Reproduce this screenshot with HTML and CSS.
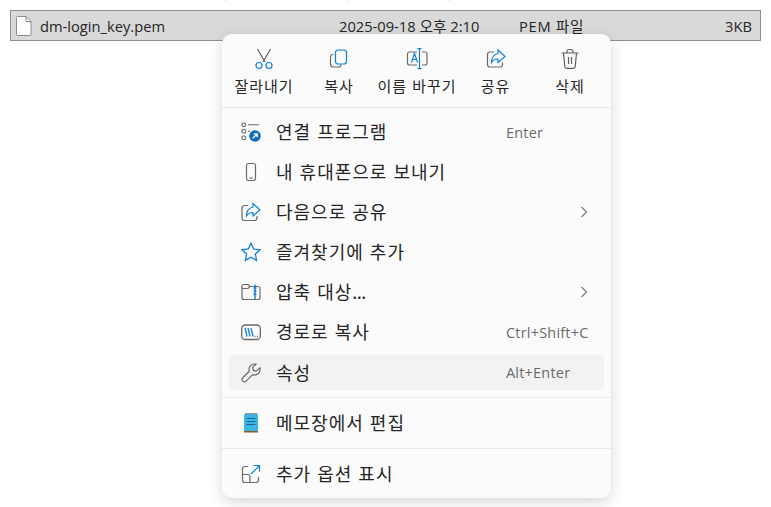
FILE: index.html

```html
<!DOCTYPE html>
<html lang="ko">
<head>
  <meta charset="UTF-8" />
  <meta name="viewport" content="width=device-width, initial-scale=1" />
  <title>파일 메뉴</title>
  <link rel="stylesheet" href="styles.css">
</head>
<body>
  <div class="header-ticks">
    <span class="tick tick-name"></span>
    <span class="tick tick-date"></span>
    <span class="tick tick-type"></span>
  </div>

  <div class="file-row">
    <svg class="file-icon" width="16" height="20" viewBox="0 0 16 20" fill="#fff" stroke="#8a8a8a">
      <path d="M1.500 .5h8.500l5 5v13a1 1 0 0 1-1 1h-12.500a1 1 0 0 1-1-1v-17a1 1 0 0 1 1-1z"/>
      <path d="M10 .5v5h5" fill="none"/>
    </svg>
    <span class="file-name">dm-login_key.pem</span>
    <span class="file-date">2025-09-18 오후 2:10</span>
    <span class="file-type">PEM 파일</span>
    <span class="file-size">3KB</span>
  </div>

  <div class="menu">
    <div class="toolbar">
      <div class="tool tool-cut">
        <svg width="20" height="22" viewBox="0 0 20 22" fill="none" stroke-width="1.200">
          <path d="M3.500 1l7.500 13M16.500 1l-7.500 13" stroke="#5f5f5f"/>
          <circle cx="5" cy="17.500" r="3" stroke="#0f7fd8"/>
          <circle cx="15" cy="17.500" r="3" stroke="#0f7fd8"/>
        </svg>
        <span>잘라내기</span>
      </div>
      <div class="tool tool-copy">
        <svg width="20" height="22" viewBox="0 0 20 22" fill="none" stroke-width="1.200">
          <path d="M4.500 6.500h-.5a2.500 2.500 0 0 0-2.500 2.500v7a3 3 0 0 0 3 3h5a2.500 2.500 0 0 0 2.500-2.500" stroke="#6a6a6a"/>
          <rect x="6.500" y="2" width="11" height="14" rx="2.500" stroke="#0f7fd8"/>
        </svg>
        <span>복사</span>
      </div>
      <div class="tool tool-rename">
        <svg width="22" height="22" viewBox="0 0 22 22" fill="none" stroke-width="1.200">
          <path d="M11 4h-7.500a2 2 0 0 0-2 2v9a2 2 0 0 0 2 2h7.500M16 4h3a2 2 0 0 1 2 2v9a2 2 0 0 1-2 2h-3" stroke="#6a6a6a"/>
          <path d="M5.500 14.500l3-9 3 9M6.500 11.500h4M13.500 .7v20M11.500 .7h4M11.500 20.700h4" stroke="#0f7fd8"/>
        </svg>
        <span>이름 바꾸기</span>
      </div>
      <div class="tool tool-share">
        <svg width="20" height="22" viewBox="0 0 20 22" fill="none" stroke-width="1.200">
          <path d="M8 4h-4a2.500 2.500 0 0 0-2.500 2.500v10a2.500 2.500 0 0 0 2.500 2.500h10a2.500 2.500 0 0 0 2.500-2.500v-2" stroke="#6a6a6a"/>
          <path d="M12 2l7 6.500-7 6v-3.500c-3 0-5 1-6.500 3.500 0-5 2.500-8 6.500-9z" stroke="#0f7fd8"/>
        </svg>
        <span>공유</span>
      </div>
      <div class="tool tool-delete">
        <svg width="20" height="22" viewBox="0 0 20 22" fill="none" stroke="#5f5f5f" stroke-width="1.200">
          <path d="M1.500 5h17M7 5v-1.500a2 2 0 0 1 2-2h2a2 2 0 0 1 2 2v1.500M3.500 5l1.300 13.500a2 2 0 0 0 2 1.800h6.400a2 2 0 0 0 2-1.800l1.300-13.500M8.500 9v7M11.500 9v7"/>
        </svg>
        <span>삭제</span>
      </div>
    </div>

    <div class="group group-main">
      <div class="item">
        <svg class="icon" width="20" height="20" viewBox="0 0 20 20" fill="none" stroke="#6a6a6a" stroke-width="1.100">
          <rect x="1" y="1" width="3.500" height="3.500" rx="1"/>
          <rect x="1" y="7.500" width="3.500" height="3.500" rx="1"/>
          <rect x="1" y="14" width="3.500" height="3.500" rx="1"/>
          <path d="M7 2.700h11M7 9.200h2"/>
          <circle cx="14" cy="14" r="5.800" fill="#0f6cbd" stroke="none"/>
          <path d="M11.800 16.300l4.300-4.400M12.800 11.800h3.400v3.400" stroke="#fff" stroke-width="1.300"/>
        </svg>
        <span class="label">연결 프로그램</span>
        <span class="shortcut">Enter</span>
      </div>
      <div class="item">
        <svg class="icon" width="20" height="20" viewBox="0 0 20 20" fill="none" stroke="#6a6a6a" stroke-width="1.200">
          <rect x="5.500" y="1.500" width="9" height="17" rx="2"/>
          <path d="M8.500 16h3"/>
        </svg>
        <span class="label">내 휴대폰으로 보내기</span>
      </div>
      <div class="item">
        <svg class="icon" width="20" height="20" viewBox="0 0 20 20" fill="none" stroke-width="1.200">
          <path d="M7 3.500h-3.500a2.500 2.500 0 0 0-2.500 2.500v10a2.500 2.500 0 0 0 2.500 2.500h10a2.500 2.500 0 0 0 2.500-2.500v-2" stroke="#6a6a6a"/>
          <path d="M12 1.500l7 6.500-7 6v-3.500c-3 0-5 1-6.500 3.500 0-5 2.500-8 6.500-9z" stroke="#0f7fd8"/>
        </svg>
        <span class="label">다음으로 공유</span>
        <svg class="chevron" width="8" height="12" viewBox="0 0 8 12" fill="none" stroke="#7a7a7a" stroke-width="1.200"><path d="M1.500 1l5 5-5 5"/></svg>
      </div>
      <div class="item">
        <svg class="icon" width="20" height="20" viewBox="0 0 20 20" fill="none" stroke="#0f7fd8" stroke-width="1.300">
          <path d="M10 1.200l2.700 5.800 6.300.8-4.600 4.300 1.200 6.300-5.600-3.100-5.600 3.100 1.200-6.300-4.600-4.300 6.300-.8z"/>
        </svg>
        <span class="label">즐겨찾기에 추가</span>
      </div>
      <div class="item">
        <svg class="icon" width="20" height="20" viewBox="0 0 20 20" fill="none" stroke-width="1.200">
          <path d="M1 5v10.500a2 2 0 0 0 2 2h14a2 2 0 0 0 2-2v-9a2 2 0 0 0-2-2h-8l-2-2h-4a2 2 0 0 0-2 2.500zM1 6.500h6l2-2" stroke="#6a6a6a"/>
          <path d="M14 2.500v15M12.500 6h3M12.500 9h3M12.500 12h3" stroke="#0f7fd8" stroke-width="1.400"/>
        </svg>
        <span class="label">압축 대상<span class="dots">...</span></span>
        <svg class="chevron" width="8" height="12" viewBox="0 0 8 12" fill="none" stroke="#7a7a7a" stroke-width="1.200"><path d="M1.500 1l5 5-5 5"/></svg>
      </div>
      <div class="item">
        <svg class="icon" width="20" height="20" viewBox="0 0 20 20" fill="none" stroke-width="1.300">
          <rect x=".7" y="3" width="18.600" height="14.500" rx="3.500" stroke="#6a6a6a"/>
          <path d="M4 6l2 8.500M7 6l2 8.500M10 6l2 8.500" stroke="#0f7fd8"/>
          <path d="M13.500 14.500h1M16 14.500h1" stroke="#6a6a6a"/>
        </svg>
        <span class="label">경로로 복사</span>
        <span class="shortcut">Ctrl+Shift+C</span>
      </div>
      <div class="item item-hover">
        <svg class="icon" width="20" height="20" viewBox="0 0 20 20" fill="none" stroke="#6a6a6a" stroke-width="1.200">
          <path d="M13.500 1a5.500 5.500 0 0 0-5.200 7.300l-6.600 6.500a2.300 2.300 0 0 0 3.300 3.300l6.600-6.500a5.500 5.500 0 0 0 7.200-6.800l-3.500 3.300-3-.7-.7-3 3.300-3.200a5.500 5.500 0 0 0-1.400-.2z"/>
        </svg>
        <span class="label">속성</span>
        <span class="shortcut">Alt+Enter</span>
      </div>
    </div>

    <div class="group group-single">
      <div class="item">
        <svg class="icon" width="20" height="20" viewBox="0 0 20 20">
          <rect x="3" y="1" width="14" height="17" rx="1" fill="#3fb4e0"/>
          <rect x="3" y="18" width="14" height="1.500" fill="#8a5a34"/>
          <path d="M5 1v-1M7 1v-1M9 1v-1M11 1v-1M13 1v-1M15 1v-1" stroke="#333"/>
          <path d="M5.500 5.500h9M5.500 8.500h9M5.500 11.500h9" stroke="#0e6a96"/>
        </svg>
        <span class="label">메모장에서 편집</span>
      </div>
    </div>

    <div class="group group-single">
      <div class="item">
        <svg class="icon" width="20" height="20" viewBox="0 0 20 20" fill="none" stroke-width="1.200">
          <path d="M7 2.500h-3a2.500 2.500 0 0 0-2.500 2.500v11a2.500 2.500 0 0 0 2.500 2.500h11a2.500 2.500 0 0 0 2.500-2.500v-3M1.500 10.500h5.500a2 2 0 0 1 2 2v6" stroke="#6a6a6a"/>
          <path d="M10 10l8-8M12.500 1.500h6v6" stroke="#0f7fd8"/>
        </svg>
        <span class="label">추가 옵션 표시</span>
      </div>
    </div>
  </div>
</body>
</html>
```

FILE: styles.css

```css
body {
  font-family: "Noto Sans CJK KR", "Noto Sans", sans-serif;
  background: #fff;
  color: #262626;
  margin: 0;
  padding: 0;
  height: 507px;
  overflow: hidden;
  position: relative;
}
.header-ticks {
  display: flex;
  height: 2px;
  padding-left: 225px;
}
.tick {
  border-left: 1px solid #e5e5e5;
}
.tick-name {
  width: 121px;
}
.tick-date {
  width: 101px;
}
.tick-type {
  width: 100px;
}
.file-row {
  display: flex;
  align-items: center;
  height: 29px;
  margin: 8px 10px 0;
  background: #d9d9d9;
  border: 1px solid #8f8f8f;
  font-family: "Open Sans", "Noto Sans CJK KR", sans-serif;
  font-size: 14.700px;
}
.file-icon {
  margin-left: 5px;
  flex: none;
}
.file-name {
  margin-left: 8px;
  width: 299px;
}
.file-date {
  width: 180px;
}
.file-type {
  flex: 1;
  letter-spacing: .7px;
}
.file-size {
  padding-right: 8px;
}

.menu {
  position: absolute;
  left: 222px;
  top: 34px;
  width: 389px;
  height: 464px;
  box-sizing: border-box;
  background: #fbfbfb;
  border-radius: 10px;
  box-shadow: 0 4px 14px rgba(0,0,0,0.16);
}
.toolbar {
  display: flex;
  height: 74px;
  box-sizing: border-box;
  padding-top: 14px;
  border-bottom: 1px solid #e9e9e9;
}
.tool {
  display: flex;
  flex-direction: column;
  align-items: center;
  gap: 6px;
  font-size: 15px;
  line-height: 20px;
  letter-spacing: 1px;
}
.tool svg {
  flex: none;
}
.tool-cut {
  width: 84px;
}
.tool-copy {
  width: 66px;
}
.tool-rename {
  width: 90px;
}
.tool-share {
  width: 67px;
}
.tool-delete {
  width: 82px;
}
.group {
  padding: 4px 7px 0;
}
.group-main {
  height: 290px;
  box-sizing: border-box;
  border-bottom: 1px solid #e9e9e9;
}
.group-single {
  height: 51px;
  box-sizing: border-box;
  padding-top: 5px;
  border-bottom: 1px solid #e9e9e9;
}
.group-single:last-child {
  border-bottom: none;
}
.item {
  display: flex;
  align-items: center;
  height: 40px;
  padding: 0 16px 0 12px;
  border-radius: 5px;
  font-size: 18px;
  letter-spacing: 1px;
  position: relative;
}
.item-hover {
  background: #f2f2f2;
  height: 35px;
  margin-top: 3px;
}
.icon {
  flex: none;
  margin-right: 15px;
}
.label {
  flex: 1;
  padding-bottom: 2px;
}
.dots {
  letter-spacing: -.6px;
}
.shortcut {
  position: absolute;
  left: 277px;
  font-family: "Open Sans", sans-serif;
  font-size: 14.500px;
  letter-spacing: .2px;
  color: #6b6b6b;
}
.chevron {
  flex: none;
}
```
